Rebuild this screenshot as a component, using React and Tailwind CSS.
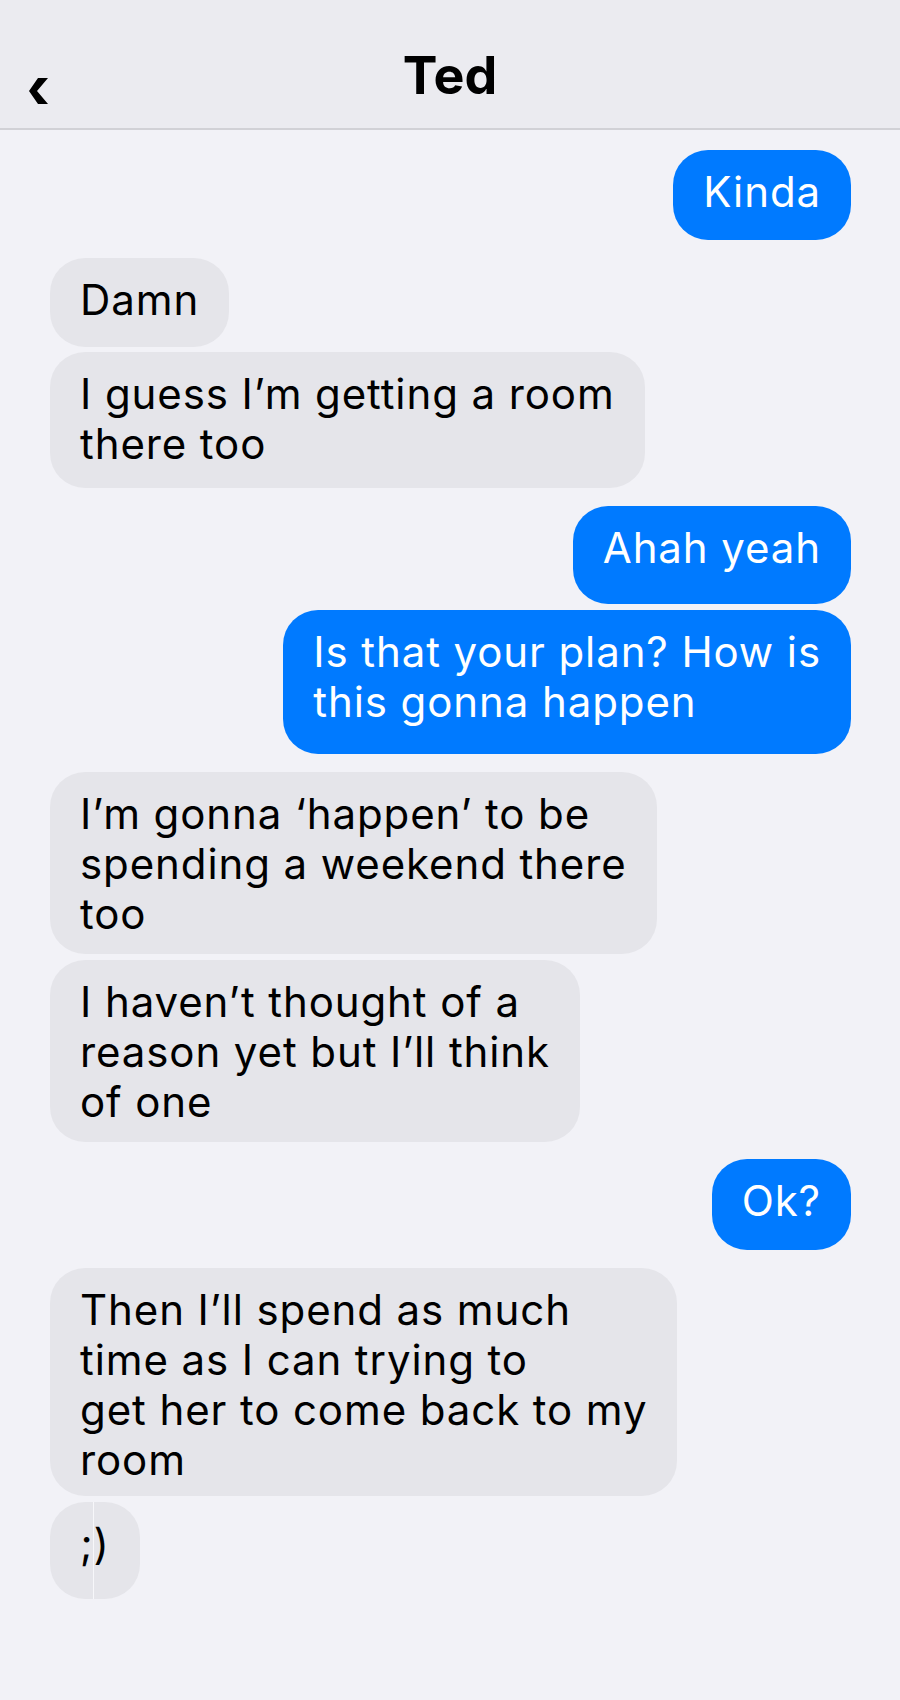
import React from 'react';

const messages = [
  { id: 1, me: true, lines: ['Kinda'], h: 'h-[90px]', mt: 'mt-0' },
  { id: 2, me: false, lines: ['Damn'], h: 'h-[89px]', mt: 'mt-[18px]' },
  { id: 3, me: false, lines: ['I guess I’m getting a room', 'there too'], h: 'h-[136px]', mt: 'mt-[5px]' },
  { id: 4, me: true, lines: ['Ahah yeah'], h: 'h-[98px]', mt: 'mt-[18px]' },
  { id: 5, me: true, lines: ['Is that your plan? How is', 'this gonna happen'], h: 'h-[144px]', mt: 'mt-[6px]' },
  { id: 6, me: false, lines: ['I’m gonna ‘happen’ to be', 'spending a weekend there', 'too'], h: 'h-[182px]', mt: 'mt-[18px]' },
  { id: 7, me: false, lines: ['I haven’t thought of a', 'reason yet but I’ll think', 'of one'], h: 'h-[182px]', mt: 'mt-[6px]' },
  { id: 8, me: true, lines: ['Ok?'], h: 'h-[91px]', mt: 'mt-[17px]' },
  { id: 9, me: false, lines: ['Then I’ll spend as much', 'time as I can trying to', 'get her to come back to my', 'room'], h: 'h-[228px]', mt: 'mt-[18px]' },
  { id: 10, me: false, lines: [';)'], h: 'h-[97px]', mt: 'mt-[6px]', split: true },
];

const Bubble = ({ msg }) => {
  const color = msg.me ? 'bg-[#007aff] text-white' : 'bg-[#e5e5ea] text-black';
  return (
    <div className={`flex ${msg.me ? 'justify-end' : 'justify-start'} ${msg.mt}`}>
      <div className={`relative ${msg.h} ${color} rounded-[35px] px-[30px] pt-[17px] text-[42px] leading-[50px] tracking-[0.9px] whitespace-nowrap`}>
        {msg.lines.map((line, i) => (
          <div key={i}>{line}</div>
        ))}
        {msg.split && <span className="absolute top-0 left-[43px] h-full w-px bg-[#f7f7fa]" />}
      </div>
    </div>
  );
};

const App = () => {
  return (
    <div className="min-h-[1700px] bg-[#f2f2f7] font-['Inter','Liberation_Sans',sans-serif]">
      {/* Header */}
      <div className="grid h-[130px] grid-cols-[1fr_auto_1fr] items-start border-b-2 border-[#d1d1d6] bg-[#ebebf0] pt-[50px]">
        <div className="pl-[29px] pt-[28px]">
          <svg width="19" height="26" viewBox="0 0 19 26" className="block">
            <polygon points="9,0 19,0 8,13 19,26 9,26 0,13" fill="#000" />
          </svg>
        </div>
        <h1 className="text-[52px] font-bold leading-[52px] text-black">Ted</h1>
        <div />
      </div>

      {/* Messages */}
      <div className="flex flex-col pl-[50px] pr-[49px] pt-[20px]">
        {messages.map((m) => (
          <Bubble key={m.id} msg={m} />
        ))}
      </div>
    </div>
  );
};

export default App;
